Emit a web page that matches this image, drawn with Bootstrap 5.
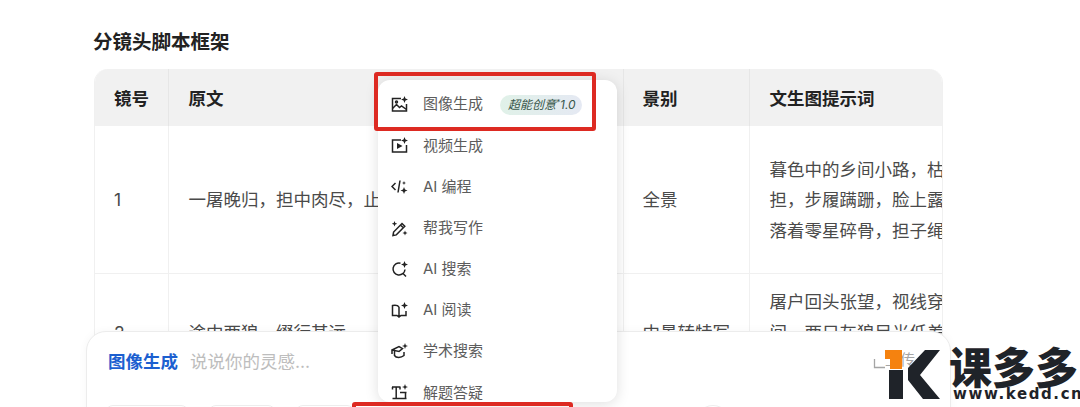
<!DOCTYPE html>
<html lang="zh">
<head>
<meta charset="utf-8">
<link href="https://cdn.jsdelivr.net/npm/bootstrap@5.3.0/dist/css/bootstrap.min.css" rel="stylesheet">
<style>
html,body{margin:0;height:407px;overflow:hidden;background:#fff;}
body{font-family:"Inter","Noto Sans CJK SC",sans-serif;color:#222;position:relative;}
.doc-area{padding:28px 137px 0 94px;}
.doc-title{font-size:19.5px;line-height:28px;font-weight:700;color:#222;margin:0 0 13px -1px;}
.grid-wrap{border-radius:14px 14px 0 0;overflow:hidden;width:849px;border-left:1px solid #f0f0f0;border-right:1px solid #f0f0f0;}
.story{width:847px;table-layout:fixed;border-collapse:collapse;font-size:17.5px;color:#4a4a4a;}
.story th{background:#f1f1f1;height:57px;padding:3px 19px 0;font-weight:700;color:#222;font-size:17.5px;border-right:1px solid #e6e6e6;white-space:nowrap;}
.story td{padding:2px 19px 0;height:147px;border-right:1px solid #f0f0f0;border-bottom:1px solid #f0f0f0;line-height:30.5px;overflow:hidden;white-space:nowrap;}
.story .row-two td{height:118px;}
.story th:nth-child(2),.story td:nth-child(2),.story th:last-child,.story td:last-child{padding-left:20px;}
.story th:last-child,.story td:last-child{border-right:0;}
.c1{width:73px}.c2{width:455px}.c3{width:126px}.c4{width:193px}
.menu-pop{position:absolute;left:378px;top:80px;width:239px;height:322px;background:#fff;border-radius:12px;box-shadow:0 2px 14px rgba(0,0,0,.13);overflow:hidden;z-index:5;padding-top:4px;}
.menu-row{height:41.2px;padding-left:13px;font-size:15px;color:#5c5c5c;gap:15px;white-space:nowrap;}
.menu-row svg{width:17px;height:17px;flex:none;fill:none;stroke:#222;stroke-width:1.5;}
.menu-row svg .sp{fill:#222;stroke:none;}
.ver-tag{font-size:12px;font-style:italic;color:#38564a;background:linear-gradient(90deg,#e0f1e8,#e5e9f3);border-radius:10px;height:20px;line-height:20px;padding:0 6px 0 8px;margin-left:2px;}
.ver-tag sup{font-size:8px;top:-.4em;}
.red-box{position:absolute;border:4px solid #dd2a22;border-radius:3px;z-index:6;}
.red-a{left:374px;top:72px;width:222px;height:59px;}
.red-b{left:352px;top:402px;width:221px;height:30px;}
.composer{position:absolute;left:86px;top:331px;width:865px;height:120px;background:#fff;border:1px solid #ececec;border-radius:20px;z-index:3;box-shadow:0 0 8px rgba(0,0,0,.04);padding:18px 21px;font-size:17.5px;line-height:24px;}
.mode{font-weight:700;color:#1c5fd0;margin-right:12px;}
.hint{color:#bdbdbd;font-size:17.5px;}
.chip{position:absolute;top:73px;height:30px;background:#fff;border:1px solid #ededed;border-radius:8px;}
.mark-box{position:absolute;left:885px;top:346px;width:195px;height:61px;z-index:8;}
.mark-word{position:absolute;left:64px;top:-2px;font-size:43px;line-height:48px;font-weight:900;color:#1f2329;white-space:nowrap;}
.mark-url{position:absolute;left:68px;top:42px;font-size:15px;line-height:12px;font-weight:700;color:#1f2329;font-family:"DejaVu Sans",sans-serif;white-space:nowrap;letter-spacing:1.6px;}
.cut-txt{position:absolute;left:885px;top:350px;font-size:15px;line-height:20px;color:#a5a5a5;z-index:4;}
.cut-ico{position:absolute;left:873px;top:355px;width:14px;height:14px;z-index:4;fill:none;stroke:#a5a5a5;stroke-width:1.3;}
</style>
</head>
<body>
<div class="doc-area">
  <h3 class="doc-title">分镜头脚本框架</h3>
  <div class="grid-wrap">
    <table class="story">
      <colgroup><col class="c1"><col class="c2"><col class="c3"><col class="c4"></colgroup>
      <thead><tr><th>镜号</th><th>原文</th><th>景别</th><th>文生图提示词</th></tr></thead>
      <tbody>
        <tr><td>1</td><td>一屠晚归，担中肉尽，止有剩骨。</td><td>全景</td><td>暮色中的乡间小路，枯<br>担，步履蹒跚，脸上露<br>落着零星碎骨，担子绳</td></tr>
        <tr class="row-two"><td>2</td><td>途中两狼，缀行甚远。</td><td>中景转特写</td><td>屠户回头张望，视线穿<br>间，两只灰狼目光低差<br>森森，紧随其后</td></tr>
      </tbody>
    </table>
  </div>
</div>

<div class="composer">
  <span class="mode">图像生成</span><span class="hint">说说你的灵感...</span>
  <span class="chip" style="left:18px;width:84px"></span>
  <span class="chip" style="left:121px;width:68px"></span>
  <span class="chip" style="left:208px;width:60px"></span>
  <span class="chip" style="left:610px;width:32px;border-radius:50%"></span>
</div>
<svg class="cut-ico" viewBox="0 0 14 14"><path d="M1.500 4v8.500H12"/></svg>
<div class="cut-txt">上传</div>

<div class="menu-pop">
  <div class="menu-row d-flex align-items-center">
    <svg viewBox="0 0 17 17"><path d="M10 2.500H1.500v12.500h14V8"/><path d="M1.500 12.500l4-4 3 3 2-1.500 5 3.500"/><circle cx="5.500" cy="6" r="1"/><path class="sp" d="M13.500 0l1 2.500 2.500 1-2.500 1-1 2.500-1-2.500-2.500-1 2.500-1z"/></svg>
    <span>图像生成</span><span class="ver-tag">超能创意<sup>*</sup>1.0</span>
  </div>
  <div class="menu-row d-flex align-items-center">
    <svg viewBox="0 0 17 17"><path d="M10 3H1.500v12h14V8"/><path class="sp" d="M6 6l5.500 3L6 12z"/><path class="sp" d="M13.500 0l1 2.500 2.500 1-2.500 1-1 2.500-1-2.500-2.500-1 2.500-1z"/></svg>
    <span>视频生成</span>
  </div>
  <div class="menu-row d-flex align-items-center">
    <svg viewBox="0 0 17 17"><path d="M4.500 5L1 8.500 4.500 12M9 2.500L7 14.500"/><path class="sp" d="M13 9l1 2.500 2.500 1-2.500 1-1 2.500-1-2.500-2.500-1 2.500-1zM13 3l.6 1.400 1.400.6-1.400.6L13 7l-.6-1.400L11 5l1.400-.6z"/></svg>
    <span>AI 编程</span>
  </div>
  <div class="menu-row d-flex align-items-center">
    <svg viewBox="0 0 17 17"><path d="M2 15.500l.6-3.400 8.400-8.600 2.800 2.800-8.500 8.600zM9.500 5l2.800 2.800"/><path class="sp" d="M3.500 1l.8 2 2 .8-2 .8-.8 2-.8-2-2-.8 2-.8zM14 10.500l.7 1.800 1.800.7-1.800.7-.7 1.800-.7-1.800-1.800-.7 1.800-.7z"/></svg>
    <span>帮我写作</span>
  </div>
  <div class="menu-row d-flex align-items-center">
    <svg viewBox="0 0 17 17"><path d="M9.500 2.200A6 6 0 1 0 14 8.500M11.800 12.300l3.200 3.200"/><path class="sp" d="M13.500 0l1 2.500 2.500 1-2.500 1-1 2.500-1-2.500-2.500-1 2.500-1z"/></svg>
    <span>AI 搜索</span>
  </div>
  <div class="menu-row d-flex align-items-center">
    <svg viewBox="0 0 17 17"><path d="M8 5C7 3.500 4 3 1.500 3.500V13.500H6l2 1.500 2-1.500h5V9M8 5v10"/><path class="sp" d="M13.500 0l1 2.500 2.500 1-2.500 1-1 2.500-1-2.500-2.500-1 2.500-1z"/></svg>
    <span>AI 阅读</span>
  </div>
  <div class="menu-row d-flex align-items-center">
    <svg viewBox="0 0 17 17"><path d="M1 7l7-3.500 3.500 2L8 8.500zM3.500 8v4.500C5 15 10 15 13 12.500V9M1 7v4"/><path class="sp" d="M14 0l.8 2.200 2.200.8-2.200.8-.8 2.200-.8-2.200-2.200-.8 2.200-.8z"/></svg>
    <span>学术搜索</span>
  </div>
  <div class="menu-row d-flex align-items-center">
    <svg viewBox="0 0 17 17"><path d="M1 3h8.500M1.500 3v2.500M9 3v2.500M5.200 3v11M1.500 14.500h14M9 8.500h6.500M14.500 8.500v6"/><path class="sp" d="M14 0l.8 2.200 2.200.8-2.200.8-.8 2.200-.8-2.200-2.200-.8 2.200-.8z"/></svg>
    <span>解题答疑</span>
  </div>
</div>

<div class="red-box red-a"></div>
<div class="red-box red-b"></div>

<div class="mark-box">
  <svg width="60" height="55" viewBox="885 346 60 55" style="position:absolute;left:0;top:0">
    <path fill="#1f2329" d="M889 370h14v29h-14zM908 368l17-18h15l-20 25 20 24h-17l-15-19z"/>
    <path fill="#f5820f" d="M885 350h17v19h-12v-10h-5z"/>
  </svg>
  <div class="mark-word">课多多</div>
  <div class="mark-url">www.kedd.cn</div>
</div>
<script src="https://cdn.jsdelivr.net/npm/bootstrap@5.3.0/dist/js/bootstrap.bundle.min.js"></script>
</body>
</html>
